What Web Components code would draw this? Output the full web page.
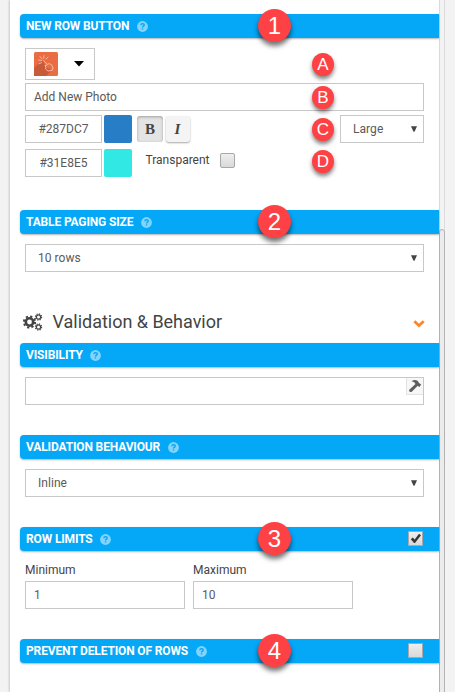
<!DOCTYPE html>
<html lang="en">
<head>
<meta charset="utf-8">
<title>Table settings</title>
<style>
html,body{margin:0;height:692px;overflow:hidden;background:#f3f3f3;font-family:Roboto,"Liberation Sans",sans-serif;font-size:12px;color:#5a5a5a}
</style>
</head>
<body>
<settings-panel></settings-panel>
<script>
const define = (name, html, setup) => customElements.define(name, class extends HTMLElement {
  connectedCallback() {
    if (this.shadowRoot) return;
    const root = this.attachShadow({ mode: 'open' });
    root.innerHTML = '<style>*{box-sizing:border-box}:host{box-sizing:border-box}</style>' + html;
    if (setup) setup(this, root);
  }
});

define('call-out', `<style>
:host{position:absolute;left:258px;top:-5px;width:33px;height:33px;border-radius:50%;background:#fd4145;color:#fff;display:flex;align-items:center;justify-content:center;font:24px/33px "Liberation Sans",sans-serif;box-shadow:0 4px 5px rgba(0,0,0,.55);z-index:2}
:host([small]){left:312px;top:var(--y,2px);width:22px;height:23px;font-size:17px;line-height:23px;box-shadow:0 3px 4px rgba(0,0,0,.5)}
</style><slot></slot>`);

define('help-icon', `<style>:host{display:block;width:11px;height:11px}svg{display:block}</style>
<svg width="11" height="11" viewBox="0 0 11 11"><circle cx="5.5" cy="5.5" r="5.4" fill="#82d4fb"/><path d="M3.8 4.2Q3.9 2.6 5.6 2.6Q7.3 2.7 7.2 4.1Q7.1 4.8 6.2 5.3Q5.5 5.7 5.5 6.4M5.5 7.3V8.5" fill="none" stroke="#08a5f3" stroke-width="1.35"/></svg>`);

define('check-box', `<style>
:host{display:block;width:15px;height:15px;border:1px solid #a8a8a8;border-radius:var(--r,0);background:linear-gradient(#eee,#d9d9d9);flex:none}
svg{display:none}:host([checked]) svg{display:block}
</style><svg width="13" height="13" viewBox="0 0 13 13"><path d="M1.8 7.2L3.7 5.5L5.7 7.4L10 1.7L12 3.3L6 11H5Z" fill="#373737"/></svg>`);

define('section-bar', `<style>
:host{position:relative;display:flex;align-items:center;height:24px;margin-left:10px;padding:0 16px 0 6px;background:#04a8f7;border-radius:4px 0 0 4px;box-shadow:0 1px 2px rgba(0,0,0,.3);color:#fff}
span{font-weight:700;letter-spacing:-.14px;white-space:nowrap;line-height:24px}
help-icon{margin-left:7.5px}.end{margin:-2px 0 0 auto}
::slotted(call-out){left:238px!important}
</style><span></span><help-icon></help-icon><div class="end"><slot name="end"></slot></div><slot></slot>`,
(h, r) => { r.querySelector('span').textContent = h.getAttribute('label'); });

define('text-box', `<style>
:host{display:flex;align-items:center;height:28px;border:1px solid #c8c8c8;background:#fff;padding:0 8px;letter-spacing:0;white-space:nowrap}
</style><slot></slot>`);

define('select-box', `<style>
:host{display:flex;align-items:center;justify-content:space-between;height:28px;border:1px solid #c8c8c8;background:#fff;padding:0 6px 0 12px;letter-spacing:.05px}
</style><slot></slot><svg width="6" height="6"><path d="M0 .3H6L3.5 5.7H2.5Z" fill="#444"/></svg>`);

define('color-field', `<style>
:host{display:flex;gap:2px}text-box{width:77px;justify-content:center;padding:0 0 0 0}i{width:28px;height:28px;border-radius:2px}
</style><text-box><slot></slot></text-box><i></i>`,
(h, r) => { r.querySelector('i').style.background = h.textContent.trim(); });

define('style-toggle', `<style>
:host{display:flex;width:24px;height:26px;align-items:center;justify-content:center;border-radius:3px;background:#f4f4f4;box-shadow:0 1px 2px rgba(0,0,0,.35);font:bold 15px "Liberation Serif",serif;color:#444}
:host([on]){width:26px;background:#e4e4e4;box-shadow:inset 0 1px 3px rgba(0,0,0,.3)}
:host([slant]){font-style:italic;padding-right:1px}
</style><slot></slot>`);

define('icon-picker', `<style>
:host{display:flex;align-items:center;width:70px;height:32px;border:1px solid #c8c8c8;padding-left:8px;gap:16px}
</style><svg width="24" height="24" viewBox="0 0 24 24"><rect width="24" height="24" rx="1.5" fill="#e96c43"/><path d="M0 16L8 8L13 16L18 18L12 24H0Z" fill="#c75a38"/>
<g fill="none" stroke="#f7b9a5" stroke-width="1" stroke-linecap="round" stroke-linejoin="round"><path d="M9.5 8.5L13.2 12.4L15.5 11.6L18 13.3L19 16L17.8 18.4L14 19L11.5 17L12 15L10.8 13.7L12.8 13M18 18.4L19 17"/><path d="M4.8 8L7.6 8.6M6 4.5L8 6.8M9.8 3.7V6.3M14 5L12 7.2M5 11.8L7.6 10.6"/></g></svg>
<svg width="10" height="6"><path d="M0 0H10L5 5.5Z" fill="#000"/></svg>`);

define('section-heading', `<style>
:host{display:flex;align-items:center;height:24px;padding:0 14px 0 13px;color:#444}
span{font-size:18px;margin-left:9.5px;line-height:24px;letter-spacing:-.02px}
svg:last-child{margin-left:auto;margin-top:4px}
</style><svg width="20" height="18" viewBox="0 0 20 18"><g fill="none" stroke="#444"><circle cx="6.5" cy="9" r="3.7" stroke-width="2.6"/><circle cx="6.5" cy="9" r="5.6" stroke-width="2" stroke-dasharray="2.2 2.2"/><circle cx="15.5" cy="4" r="2.1" stroke-width="1.2"/><circle cx="15.5" cy="4" r="3.1" stroke-width="1.2" stroke-dasharray="1.22 1.22"/><circle cx="15.5" cy="14" r="2.1" stroke-width="1.2"/><circle cx="15.5" cy="14" r="3.1" stroke-width="1.2" stroke-dasharray="1.22 1.22"/></g></svg>
<span><slot></slot></span><svg width="12" height="8" viewBox="0 0 12 8"><path d="M1.3 1.3L6 5.6L10.7 1.3" fill="none" stroke="#ff8526" stroke-width="2.8"/></svg>`);

define('expression-field', `<style>
:host{display:flex;justify-content:flex-end;height:28px;border:1px solid #c8c8c8}
div{width:17px;height:17px;background:#f7f7f7;border:solid #e2e2e2;border-width:0 0 1px 1px}svg{display:block}
</style><div><svg width="16" height="16" viewBox="0 0 16 16"><path d="M2 12L9 5.5L11 7.5L4.5 14L2.5 13.8Z" fill="#5e5e5e"/><path d="M4.5 3.2Q8 .6 11 3.2L12 5L14.2 6.6L12.4 8.9L10.5 7.8L8.4 5.7Q7.5 3.4 4.5 3.2Z" fill="#5e5e5e"/></svg></div>`);

define('scroll-track', `<style>
:host{display:block;width:6px;height:692px;background:#f3f3f3;border:solid #dcdcdc;border-width:0 1px 0 1px;padding-top:229px}
div{width:6px;height:480px;margin-left:-1px;background:#ececec;border:1px solid #b4b4b4;border-radius:3px}
</style><div></div>`);

define('settings-panel', `<style>
:host{display:flex;width:455px;height:692px;padding-left:10px;overflow:hidden}
main{width:429px;height:692px;background:#fff;padding-top:14px;box-shadow:-1px 0 2px rgba(0,0,0,.18);position:relative}
.body{margin:10px 15px 0;position:relative}
.row{display:flex;position:relative}
.tools{margin-top:4px}.tools color-field{margin-right:5px}.tools select-box{width:84px;margin-left:auto}
style-toggle{margin-top:1px}style-toggle+style-toggle{margin:1px 0 0 3px}
.second{margin-top:6px}.trans{margin:3px 0 0 13.5px;line-height:16px;color:#444}
.second check-box{--r:2px;margin:4px 0 0 10px}
.num{width:160px}.num p{margin:0 0 4px;line-height:14px;color:#444}
.row call-out{left:287px}
</style><main>
<section-bar label="NEW ROW BUTTON"><call-out>1</call-out></section-bar>
<div class="body">
<div class="row"><icon-picker></icon-picker><call-out small style="--y:5px">A</call-out></div>
<div class="row" style="margin-top:3px"><text-box style="width:100%">Add New Photo</text-box><call-out small style="--y:3px">B</call-out></div>
<div class="row tools"><color-field>#287DC7</color-field><style-toggle on>B</style-toggle><style-toggle slant>I</style-toggle><select-box>Large</select-box><call-out small style="--y:3px">C</call-out></div>
<div class="row second"><color-field>#31E8E5</color-field><span class="trans">Transparent</span><check-box></check-box><call-out small style="--y:1px">D</call-out></div>
</div>
<section-bar label="TABLE PAGING SIZE" style="margin-top:33px"><call-out>2</call-out></section-bar>
<div class="body"><select-box>10 rows</select-box></div>
<section-heading style="margin-top:38px">Validation &amp; Behavior</section-heading>
<section-bar label="VISIBILITY" style="margin-top:9px"></section-bar>
<div class="body"><expression-field></expression-field></div>
<section-bar label="VALIDATION BEHAVIOUR" style="margin-top:30px"></section-bar>
<div class="body"><select-box>Inline</select-box></div>
<section-bar label="ROW LIMITS" style="margin-top:30px"><check-box slot="end" checked></check-box><call-out>3</call-out></section-bar>
<div class="body row" style="gap:8px;margin-top:12px"><div class="num"><p>Minimum</p><text-box>1</text-box></div><div class="num"><p>Maximum</p><text-box>10</text-box></div></div>
<section-bar label="PREVENT DELETION OF ROWS" style="margin-top:30px"><check-box slot="end"></check-box><call-out>4</call-out></section-bar>
</main><scroll-track></scroll-track>`);
</script>
</body>
</html>
